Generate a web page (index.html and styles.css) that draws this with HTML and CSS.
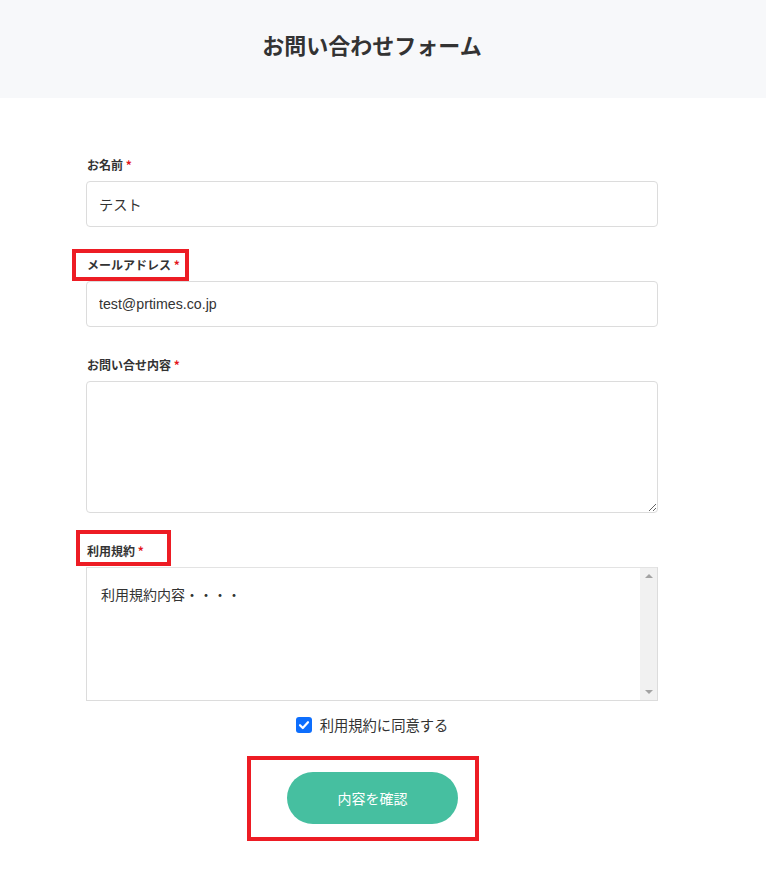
FILE: index.html
```html
<!DOCTYPE html>
<html lang="ja">
<head>
<meta charset="utf-8">
<title>お問い合わせフォーム</title>
<link rel="stylesheet" href="styles.css">
</head>
<body>
<div class="page">
  <header class="header">
    <h1 class="title">お問い合わせフォーム</h1>
  </header>
  <main class="form">
    <div class="field">
      <label class="label">お名前 <span class="req">*</span></label>
      <input class="input" type="text" value="テスト">
    </div>
    <div class="field">
      <label class="label">メールアドレス <span class="req">*</span></label>
      <input class="input" type="text" value="test@prtimes.co.jp">
    </div>
    <div class="field">
      <label class="label">お問い合せ内容 <span class="req">*</span></label>
      <textarea class="textarea"></textarea>
    </div>
    <div class="field field-terms">
      <label class="label">利用規約 <span class="req">*</span></label>
      <div class="terms">
        <div class="terms-body">利用規約内容・・・・</div>
        <div class="scrollbar">
          <span class="arrow arrow-up"></span>
          <span class="arrow arrow-down"></span>
        </div>
      </div>
    </div>
    <div class="agree">
      <svg class="check" width="16" height="16" viewBox="0 0 16 16" aria-hidden="true">
        <rect x="0" y="0" width="16" height="16" rx="3" fill="#0d6efd"/>
        <path d="M4 8.2 L6.8 11 L12 5.2" fill="none" stroke="#fff" stroke-width="2.2" stroke-linecap="round" stroke-linejoin="round"/>
      </svg>
      <span class="agree-text">利用規約に同意する</span>
    </div>
    <div class="actions">
      <button class="btn" type="button">内容を確認</button>
    </div>
  </main>
  <div class="mark mark-email"></div>
  <div class="mark mark-terms"></div>
  <div class="mark mark-btn"></div>
</div>
</body>
</html>
```
FILE: styles.css
```css
* { box-sizing: border-box; }
html, body { margin: 0; padding: 0; background: #fff; }
body {
  font-family: "Liberation Sans", "Noto Sans CJK JP", sans-serif;
  color: #333;
}
.page { position: relative; min-height: 871px; }
.header {
  height: 98px;
  background: #f7f8fa;
  display: flex;
  align-items: center;
  justify-content: center;
  padding: 0 22px 10px 0;
}
.title {
  margin: 0;
  font-family: "Noto Sans CJK JP", sans-serif;
  font-size: 22px;
  font-weight: 700;
  line-height: 30px;
  color: #333;
}
.form {
  width: 572px;
  margin: 0 0 0 86px;
  padding-top: 58px;
}
.field { margin-bottom: 29px; }
.field-terms { margin-bottom: 0; }
.label {
  display: block;
  font-family: "Noto Sans CJK JP", sans-serif;
  font-size: 12px;
  font-weight: 700;
  line-height: 18px;
  margin: 0 0 7px 1px;
  color: #333;
}
.req { color: #e3141d; }
.input {
  display: block;
  width: 100%;
  height: 46px;
  border: 1px solid #dcdcdc;
  border-radius: 4px;
  padding: 0 12px;
  font-family: "Liberation Sans", "Noto Sans CJK JP", sans-serif;
  font-size: 14.2px;
  color: #333;
  background: #fff;
  outline: none;
}
.textarea {
  display: block;
  width: 100%;
  height: 132px;
  border: 1px solid #dcdcdc;
  border-radius: 4px;
  padding: 10px 12px;
  font-size: 14px;
  resize: vertical;
  outline: none;
  background: #fff;
}
.terms {
  display: flex;
  height: 134px;
  border: 1px solid #dcdcdc;
  border-top-color: #e3e3e3;
}
.terms-body {
  flex: 1;
  padding: 16px 14px;
  font-family: "Noto Sans CJK JP", sans-serif;
  font-size: 14px;
  line-height: 20px;
  color: #333;
}
.scrollbar {
  width: 17px;
  background: #f1f1f1;
  display: flex;
  flex-direction: column;
  justify-content: space-between;
  align-items: center;
  padding: 6px 0 6px;
}
.arrow {
  width: 0;
  height: 0;
  border-left: 4px solid transparent;
  border-right: 4px solid transparent;
}
.arrow-up { border-bottom: 4px solid #a3a3a3; }
.arrow-down { border-top: 4px solid #a3a3a3; }
.agree {
  display: flex;
  align-items: center;
  justify-content: center;
  gap: 8px;
  margin-top: 15px;
  height: 18px;
}
.check { display: block; margin-top: -1px; }
.agree-text {
  font-family: "Noto Sans CJK JP", sans-serif;
  font-size: 14.3px;
  line-height: 18px;
  color: #333;
}
.actions {
  display: flex;
  justify-content: center;
  margin-top: 38px;
  padding-left: 1px;
}
.btn {
  width: 171px;
  height: 52px;
  border: none;
  border-radius: 26px;
  background: #46bfa0;
  color: #fff;
  font-family: "Noto Sans CJK JP", sans-serif;
  font-size: 14px;
  cursor: pointer;
}
.mark {
  position: absolute;
  border: 4px solid #ed1c24;
  pointer-events: none;
}
.mark-email { left: 72px; top: 249px; width: 117px; height: 32px; }
.mark-terms { left: 76px; top: 530px; width: 95px; height: 36px; }
.mark-btn { left: 247px; top: 756px; width: 232px; height: 85px; }
```
